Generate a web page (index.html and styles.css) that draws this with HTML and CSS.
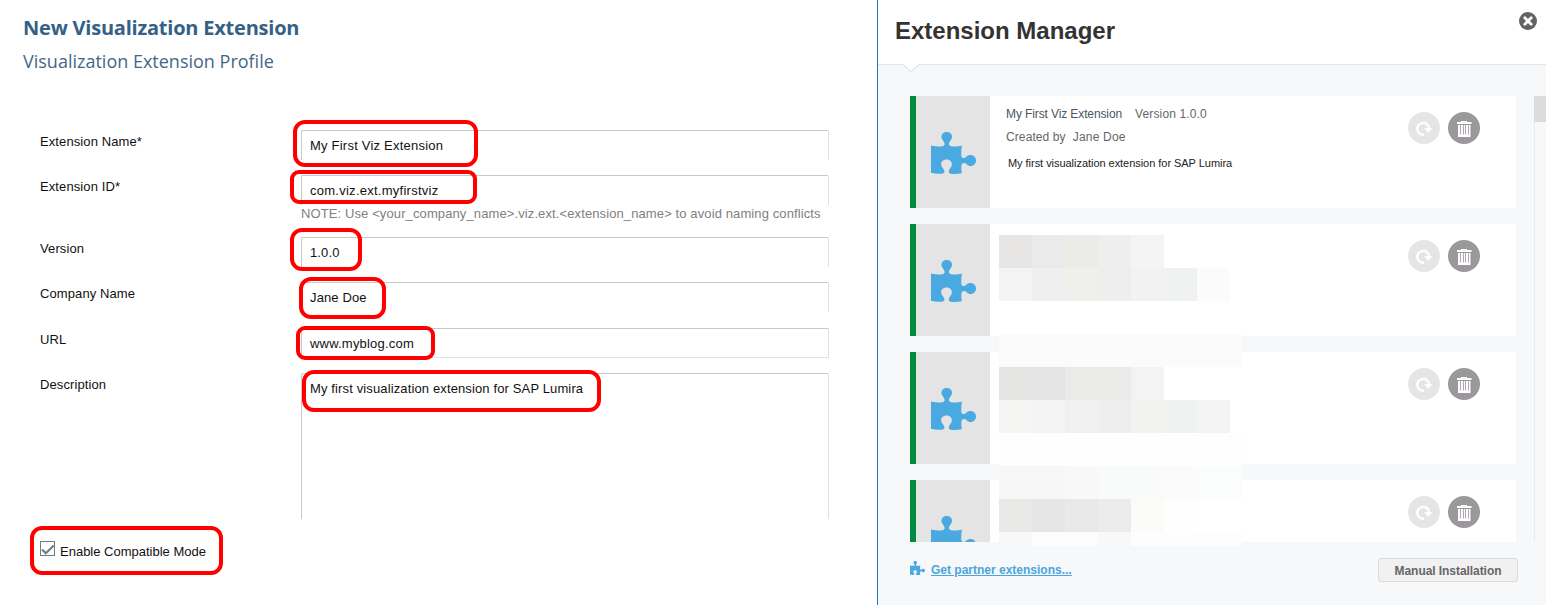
FILE: index.html
```html
<!DOCTYPE html>
<html lang="en">
<head>
<meta charset="utf-8">
<title>Visualization Extension</title>
<link rel="stylesheet" href="styles.css">
</head>
<body>
<svg class="defs" width="0" height="0" aria-hidden="true">
  <symbol id="puzzle" viewBox="0 0 45 42"><path d="M0 13.500C4 14.500 8 14.800 11 14.300C14.500 13.600 14 11 12 8.500C8.500 4 11.500 0 15.700 0C20 0 23 4 19.500 8.500C17.500 11 17 13.600 20.500 14.300C24 14.800 28 14.300 31 13.500C30.500 16 30 20 30.300 23.500C30.800 27 33 26.500 35.500 24.500C40 21 45 24 45 28.500C45 33 40 36 36 32.500C33 30 30.800 31 30.300 34C30 37 30.500 39 31 41C27 42 23 42.300 20 41.700C17 41 17.500 38.500 19 36.500C23 31.500 20 27.500 15.700 27.500C11 27.500 8 31.500 12 36.500C14 39 14 41 11.500 41.600C8 42.300 4 41.500 0 40.800Z" fill="#49a9e0"/></symbol>
  <symbol id="refresh" viewBox="0 0 32 32"><circle cx="16" cy="16" r="16" fill="#e5e5e5"/><path d="M16.200 22.600A5.900 5.900 0 1 1 21 16" fill="none" stroke="#fff" stroke-width="2.400"/><path d="M16 16H24.500L20.500 20.800Z" fill="#fff"/></symbol>
  <symbol id="trash" viewBox="0 0 32 32"><circle cx="16" cy="16" r="16" fill="#999"/><path d="M9 10H13V9H19V10H23.500V12H9Z M10 13H22.500V25H10Z" fill="#fff"/><path d="M12.500 13V22.500M15.500 13V22.500M17.500 13V22.500M20.500 13V22.500" stroke="#b7a3b9" stroke-width="1"/></symbol>
</svg>
<div class="app">
  <main class="profile">
    <h1 class="title">New Visualization Extension</h1>
    <h2 class="subtitle">Visualization Extension Profile</h2>
    <form class="form">
      <div class="row"><label>Extension Name*</label><div class="field field-name">My First Viz Extension<i class="mark mark-name"></i></div></div>
      <div class="row row-note"><label>Extension ID*</label><div><div class="field field-id">com.viz.ext.myfirstviz<i class="mark mark-id"></i></div><p class="note">NOTE: Use &lt;your_company_name&gt;.viz.ext.&lt;extension_name&gt; to avoid naming conflicts</p></div></div>
      <div class="row"><label>Version</label><div class="field">1.0.0<i class="mark mark-version"></i></div></div>
      <div class="row row-company"><label>Company Name</label><div class="field">Jane Doe<i class="mark mark-company"></i></div></div>
      <div class="row"><label>URL</label><div class="field field-closed">www.myblog.com<i class="mark mark-url"></i></div></div>
      <div class="row row-desc"><label>Description</label><div class="field field-tall">My first visualization extension for SAP Lumira<i class="mark mark-desc"></i></div></div>
    </form>
    <div class="compat">
      <svg width="15" height="15" viewBox="0 0 15 15"><rect x=".5" y=".5" width="14" height="14" fill="#fff" stroke="#6b7f8a"/><path d="M2 8.500L5.800 12.200L13.800 4.500" fill="none" stroke="#6b7f8a" stroke-width="2.200"/></svg>
      <span>Enable Compatible Mode</span><i class="mark mark-compat"></i>
    </div>
  </main>
  <aside class="manager">
    <header class="manager-head">
      <h2>Extension Manager</h2>
      <svg class="close" width="18" height="18" viewBox="0 0 18 18"><circle cx="9" cy="9" r="9" fill="#636363"/><path d="M5.800 5.800L12.200 12.200M12.200 5.800L5.800 12.200" stroke="#fff" stroke-width="2.800" stroke-linecap="round"/></svg>
      <svg class="notch" width="16" height="8" viewBox="0 0 16 8"><path d="M0 0L8 7.500L16 0Z" fill="#fff"/><path d="M0 .5L8 7.500L16 .5" fill="none" stroke="#d8dadc"/></svg>
    </header>
    <div class="list">
      <div class="cards">
        <article class="card"><div class="thumb"><svg width="45" height="42"><use href="#puzzle"/></svg></div>
          <div class="info"><p class="line1"><span class="name">My First Viz Extension</span><span class="ver">Version 1.0.0</span></p><p class="line2"><span class="by">Created by</span><span class="who">Jane Doe</span></p><p class="line3">My first visualization extension for SAP Lumira</p></div>
          <div class="acts"><svg width="32" height="32"><use href="#refresh"/></svg><svg width="32" height="32"><use href="#trash"/></svg></div></article>
        <article class="card"><div class="thumb"><svg width="45" height="42"><use href="#puzzle"/></svg></div><div class="info"></div>
          <div class="acts"><svg width="32" height="32"><use href="#refresh"/></svg><svg width="32" height="32"><use href="#trash"/></svg></div></article>
        <article class="card"><div class="thumb"><svg width="45" height="42"><use href="#puzzle"/></svg></div><div class="info"></div>
          <div class="acts"><svg width="32" height="32"><use href="#refresh"/></svg><svg width="32" height="32"><use href="#trash"/></svg></div></article>
        <article class="card"><div class="thumb"><svg width="45" height="42"><use href="#puzzle"/></svg></div><div class="info"></div>
          <div class="acts"><svg width="32" height="32"><use href="#refresh"/></svg><svg width="32" height="32"><use href="#trash"/></svg></div></article>
      </div>
      <div class="scroll"><div class="scroll-thumb"></div></div>
      <div class="mosaic" id="mosaic"></div>
    </div>
    <footer class="manager-foot">
      <svg width="15" height="14"><use href="#puzzle"/></svg>
      <a class="partner">Get partner extensions...</a>
      <button class="install">Manual Installation</button>
    </footer>
  </aside>
</div>
<script src="mosaic.js"></script>
</body>
</html>
```
FILE: styles.css
```css
* { box-sizing: border-box; }
body { margin: 0; background: #fff; color: #111; font-family: "Liberation Sans", Arial, sans-serif; font-size: 13px; overflow: hidden; }
h1, h2, p { margin: 0; }
.defs { position: absolute; }
.app { display: flex; width: 1546px; height: 605px; }
.profile { width: 877px; padding: 12px 0 0 23px; }
.title { font: 700 20px/32px "Open Sans", sans-serif; letter-spacing: -0.22px; color: #346187; }
.subtitle { font: 400 18px/34px "Open Sans", sans-serif; color: #446787; }
.form { margin-top: 52px; padding-left: 17px; }
.row { display: grid; grid-template-columns: 261px 528px; height: 45px; align-items: start; }
.row label { line-height: 24px; justify-self: start; letter-spacing: 0.1px; }
.row-note { height: 62px; }
.row-company { height: 46px; }
.row-desc { height: 146px; }
.field { position: relative; height: 30px; padding-left: 8px; border: 1px solid #c8c8c8; border-right-color: #dfdfdf; border-bottom: 0; border-radius: 2px 2px 0 0; line-height: 29px; letter-spacing: 0.13px; }
.field-name { letter-spacing: 0.22px; }
.field-id { letter-spacing: 0.26px; }
.field-closed { border-bottom: 1px solid #e2e2e2; letter-spacing: 0.2px; }
.field-tall { height: 146px; }
.note { line-height: 18px; color: #808080; letter-spacing: 0.11px; }
.compat { position: relative; display: flex; gap: 5px; margin: 22px 0 0 17px; width: 180px; }
.compat span { line-height: 22px; }
.mark { position: absolute; border: 4px solid #fe0000; border-radius: 12px; }
.mark-name { left: -9px; top: -11px; width: 185px; height: 47px; }
.mark-id { left: -12px; top: -6px; width: 187px; height: 34px; border-radius: 9px; }
.mark-version { left: -12px; top: -10px; width: 72px; height: 43px; }
.mark-company { left: -3px; top: -6px; width: 87px; height: 42px; }
.mark-url { left: -6px; top: -3px; width: 139px; height: 34px; border-radius: 9px; }
.mark-desc { left: 0; top: -4px; width: 299px; height: 42px; }
.mark-compat { left: -10px; top: -15px; width: 193px; height: 49px; }
.manager { width: 669px; border-left: 1px solid #1f7ab8; background: #f6f8fa; }
.manager-head { position: relative; display: flex; justify-content: space-between; height: 65px; padding: 12px 9px 0 17px; background: #fff; border-bottom: 1px solid #e4e6e8; }
.manager-head h2 { font-size: 24px; line-height: 38px; color: #333; }
.notch { position: absolute; left: 25px; top: 64px; }
.list { position: relative; display: flex; justify-content: space-between; height: 446px; margin: 31px 0 0 32px; }
.cards { display: flex; flex-direction: column; gap: 16px; width: 606px; height: 446px; overflow: hidden; }
.card { display: flex; flex: none; height: 112px; background: #fff; border-left: 6px solid #008c3e; }
.thumb { width: 74px; padding: 36px 0 0 15px; background: #e4e4e4; }
.info { flex: 1; padding: 7px 0 0 16px; font-size: 12px; color: #666; }
.line1 { display: flex; gap: 13px; line-height: 22px; }
.name { color: #4c5560; letter-spacing: -0.11px; }
.ver { letter-spacing: 0.13px; }
.line2 { display: flex; gap: 7px; line-height: 24px; }
.by { letter-spacing: 0.1px; }
.who { letter-spacing: 0.2px; }
.line3 { padding: 3px 0 0 2px; font-size: 11px; line-height: 22px; letter-spacing: -0.04px; color: #222; }
.acts { display: flex; gap: 8px; padding: 16px 36px 0 0; }
.scroll { width: 12px; border-left: 1px solid #e8eaec; }
.scroll-thumb { width: 12px; height: 26px; margin-left: -1px; background: #dcdcdc; }
.mosaic { position: absolute; left: 89px; top: 139px; display: grid; grid-template-columns: repeat(7, 33px) 12px; grid-template-rows: repeat(9, 33px) 14px; }
.manager-foot { display: flex; padding: 16px 28px 0 32px; }
.manager-foot svg { margin-top: 3px; }
.partner { margin-left: 6px; font-size: 12px; line-height: 25px; font-weight: 700; color: #4ba6dc; text-decoration: underline; }
.install { margin-left: auto; width: 140px; height: 24px; padding: 2px 0 0; border: 1px solid #d9dadb; border-radius: 3px; background: #f1f1f1; font: 700 12px/20px "Liberation Sans", Arial, sans-serif; letter-spacing: -0.06px; color: #666; }
```
FILE: mosaic.js
```
const rows = [
  "e8e6e4 eaeaea ebebe8 eeeeee f4f4f4 ffffff ffffff ffffff",
  "f3f3f3 efefef efefec eeeeee f2f2f2 f0f2f1 fbfbfb ffffff",
  "ffffff ffffff ffffff ffffff ffffff ffffff ffffff ffffff",
  "fbfbfb fbfbfb fbfbfb fbfbfb fbfbfb fbfbfb fbfbfb fbfbfb",
  "e4e4e2 e4e4e4 eaeae8 eaeae8 f3f3f3 ffffff ffffff ffffff",
  "f5f5f3 f3f3f3 f0f0f0 eeeeee f2f2ef f0f2f1 f3f3f3 ffffff",
  "fefefe fefefe fefefe fefefe fefefe fefefe fefefe fefefe",
  "f6f6f6 f6f6f6 f8f8f8 f9fbfa f9fbfa fbfbfb fbfdfc fbfdfc",
  "e9e9e7 e6e6e6 e9e9e9 ececec fbfbf8 fefefe ffffff ffffff",
  "f8f8f8 fbfdfc fbfdfc f8f8f8 fcfefd fcfefd fcfefd fcfefd"
];
const mosaic = document.getElementById("mosaic");
rows.join(" ").split(" ").forEach(color => {
  const cell = document.createElement("div");
  cell.style.background = "#" + color;
  mosaic.append(cell);
});
```
